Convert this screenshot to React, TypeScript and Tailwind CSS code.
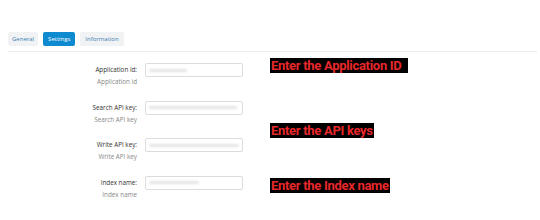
import React from 'react';

const fields = [
  { label: 'Application id', blur: 'w-[38px]' },
  { label: 'Search API key', blur: 'w-[88px]' },
  { label: 'Write API key', blur: 'w-[90px]' },
  { label: 'Index name', blur: 'w-[50px]' },
];

const App: React.FC = () => {
  return (
    <div className="w-[540px] h-[220px] bg-white overflow-hidden font-['Open_Sans',sans-serif]">
      {/* Tabs */}
      <div className="pt-[32px] pl-[8px]">
        <div className="flex gap-[5px] text-[6px] leading-none">
          <div className="h-[14px] px-[4px] flex items-center rounded-[2px] bg-[#f1f2f3] text-[#3a7fb4]">General</div>
          <div className="h-[14px] px-[5px] flex items-center rounded-[2px] bg-[#0e8ad0] text-white">Settings</div>
          <div className="h-[14px] px-[5px] flex items-center rounded-[2px] bg-[#f1f2f3] text-[#3a7fb4]">Information</div>
        </div>
        <div className="mt-[5px] h-px bg-[#ececec] mr-[3px]" />
      </div>

      <div className="flex">
        {/* Form */}
        <div className="pt-[11px] flex flex-col gap-[15px]">
          {fields.map((f) => (
            <div key={f.label} className="flex items-start">
              <div className="w-[137px] flex flex-col items-end text-[6.3px] leading-none">
                <span className="mt-[4px] text-[#333]">{f.label}:</span>
                <span className="mt-[6px] text-[#888]">{f.label}</span>
              </div>
              <div className="ml-[8px] w-[98px] h-[14px] border border-[#dcdcdc] rounded-[2px] flex items-center px-[3px]">
                <div className={`${f.blur} h-[3px] rounded-full bg-[#e4e4e4] blur-[1px]`} />
              </div>
            </div>
          ))}
        </div>

        {/* Annotations */}
        <div className="ml-[27px] pt-[6px] flex flex-col items-start font-['Roboto',sans-serif] font-bold text-[13px] tracking-[-0.3px] leading-[15px] text-[#e8282b]">
          <span className="bg-black pl-[1px] pr-[7px]">Enter the Application ID</span>
          <span className="bg-black pl-[1px] pr-[1px] mt-[50px]">Enter the API keys</span>
          <span className="bg-black pl-[1px] pr-[1px] mt-[40px]">Enter the Index name</span>
        </div>
      </div>
    </div>
  );
};

export default App;
